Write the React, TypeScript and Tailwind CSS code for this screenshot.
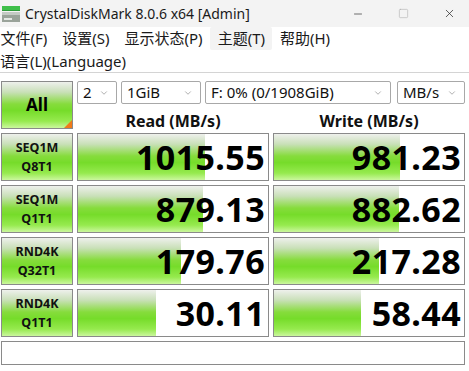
import { X, Minus, Square, ChevronDown } from 'lucide-react'

const barBg =
  'bg-[linear-gradient(to_bottom,#eef0ec_0%,#c9e0b8_22%,#86dc3c_48%,#76dc2a_62%,#96ea4e_85%,#cbf79e_100%)]'

const rows = [
  { a: 'SEQ1M', b: 'Q8T1', read: '1015.55', write: '981.23', rw: 127, ww: 126 },
  { a: 'SEQ1M', b: 'Q1T1', read: '879.13', write: '882.62', rw: 125, ww: 125 },
  { a: 'RND4K', b: 'Q32T1', read: '179.76', write: '217.28', rw: 103, ww: 105 },
  { a: 'RND4K', b: 'Q1T1', read: '30.11', write: '58.44', rw: 78, ww: 87 },
]

const menus = ['文件(F)', '设置(S)', '显示状态(P)', '主题(T)', '帮助(H)']

function Select({ w, label }: { w: string; label: string }) {
  return (
    <div
      className={`${w} h-[23px] flex items-center justify-between border border-[#a8a8a8] rounded-[2px] bg-white pl-[5px] pr-[7px] text-[15px] leading-none text-[#111]`}
    >
      <span>{label}</span>
      <ChevronDown className="w-[10px] h-[10px] text-[#777]" strokeWidth={1.4} />
    </div>
  )
}

function Value({ value, width }: { value: string; width: number }) {
  return (
    <div className="relative h-[48px] border border-[#8a8a8a] bg-white flex items-center justify-end pr-[3px]">
      <div className={`absolute left-0 top-0 bottom-0 ${barBg}`} style={{ width }} />
      <span className="relative text-[34px] font-bold leading-none text-black tracking-[0.4px]">{value}</span>
    </div>
  )
}

export default function App() {
  return (
    <div className="w-[469px] h-[371px] bg-white overflow-hidden font-['Noto_Sans','Noto_Sans_CJK_SC',sans-serif]">
      <div className="h-[27px] bg-[#f3f3f3] flex items-center">
        <svg width="20" height="18" viewBox="0 0 20 18" className="ml-[1px] mr-[4px]">
          <rect x="1" y="1" width="18" height="4" fill="#3fbf4a" />
          <rect x="1" y="5" width="18" height="1" fill="#2e9a3a" />
          <rect x="1" y="7" width="18" height="10" fill="#9aa39a" />
          <rect x="1" y="7" width="18" height="3" fill="#c4cac4" />
          <rect x="3" y="13" width="8" height="2" fill="#e4e8e4" />
        </svg>
        <span className="text-[14px] text-[#1a1a1a] leading-none">CrystalDiskMark 8.0.6 x64 [Admin]</span>
        <div className="ml-auto flex items-center">
          <Minus className="w-[12px] h-[12px] text-[#222] mr-[34px]" strokeWidth={1.3} />
          <Square className="w-[11px] h-[11px] text-[#aaa] mr-[34px]" strokeWidth={1.2} />
          <X className="w-[13px] h-[13px] text-[#222] mr-[13px]" strokeWidth={1.3} />
        </div>
      </div>
      <div className="h-[23px] flex items-stretch -ml-[7px] text-[15px] text-[#1a1a1a]">
        {menus.map((m) => (
          <div
            key={m}
            className={`px-[7.5px] flex items-center ${m === '主题(T)' ? 'bg-[#f3f3f3] rounded-[2px]' : ''}`}
          >
            {m}
          </div>
        ))}
      </div>
      <div className="h-[22px] flex items-center text-[15px] text-[#1a1a1a]">语言(L)(Language)</div>
      <div className="h-[1px] bg-[#d4d4d4]" />
      <div className="pl-[1px] pt-[8px] grid grid-cols-[72px_192px_192px] gap-x-[4px] gap-y-[4px]">
        <div
          className={`relative h-[48px] border border-[#8a8a8a] ${barBg} flex items-center justify-center text-[17px] font-bold text-black`}
        >
          All
          <div className="absolute right-0 bottom-0 w-0 h-0 border-l-[8px] border-l-transparent border-b-[8px] border-b-[#f07a1a]" />
        </div>
        <div className="col-span-2 flex flex-col">
          <div className="flex">
            <Select w="w-[40px]" label="2" />
            <Select w="w-[80px] ml-[4px]" label="1GiB" />
            <Select w="w-[186px] ml-[4px]" label="F: 0% (0/1908GiB)" />
            <Select w="w-[68px] ml-[6px]" label="MB/s" />
          </div>
          <div className="h-[25px] flex items-center pt-[8px] text-[16px] leading-none font-bold text-[#111]">
            <div className="w-[192px] text-center">Read (MB/s)</div>
            <div className="w-[192px] ml-[4px] text-center">Write (MB/s)</div>
          </div>
        </div>
        {rows.map((r, i) => (
          <div key={i} className="contents">
            <div
              className={`h-[48px] border border-[#8a8a8a] ${barBg} flex flex-col items-center justify-center text-[12.5px] font-bold leading-[19px] text-[#111]`}
            >
              <span>{r.a}</span>
              <span>{r.b}</span>
            </div>
            <Value value={r.read} width={r.rw} />
            <Value value={r.write} width={r.ww} />
          </div>
        ))}
        <div className="col-span-3 h-[24px] border border-[#8a8a8a] bg-white" />
      </div>
    </div>
  )
}
